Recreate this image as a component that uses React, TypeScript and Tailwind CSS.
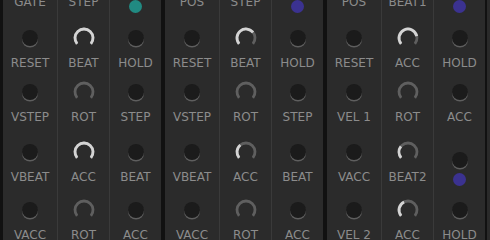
import React from "react";

type Widget = { kind: "jack" } | { kind: "knob"; v: number };
type Row = { w: Widget; label: string; special?: boolean };
type Col = { top: string; led?: string; rows: Row[] };

const J: Widget = { kind: "jack" };
const K = (v: number): Widget => ({ kind: "knob", v });

const SLOT_H = ["h-[49px]", "h-[42px]", "h-[48px]", "h-[46px]"];

function polar(cx: number, cy: number, r: number, deg: number) {
  const a = (deg * Math.PI) / 180;
  return [cx + r * Math.sin(a), cy - r * Math.cos(a)];
}

function arc(cx: number, cy: number, r: number, a0: number, a1: number) {
  const [x0, y0] = polar(cx, cy, r, a0);
  const [x1, y1] = polar(cx, cy, r, a1);
  const large = a1 - a0 > 180 ? 1 : 0;
  return `M ${x0.toFixed(2)} ${y0.toFixed(2)} A ${r} ${r} 0 ${large} 1 ${x1.toFixed(2)} ${y1.toFixed(2)}`;
}

function Knob({ v }: { v: number }) {
  const a0 = -130;
  const a1 = 130;
  const av = a0 + v * (a1 - a0);
  return (
    <svg width="24" height="24" viewBox="0 0 24 24">
      <path d={arc(12, 12, 9, a0, a1)} fill="none" stroke="#5f5f5f" strokeWidth="2.8" />
      {v > 0.01 && (
        <path d={arc(12, 12, 9, a0, av)} fill="none" stroke="#d4d4d4" strokeWidth="2.8" />
      )}
    </svg>
  );
}

function Jack() {
  return (
    <div className="w-[16px] h-[16px] rounded-full bg-[#1b1b1b] shadow-[0_1.5px_0_0_#5e5e5e]" />
  );
}

function Led({ color }: { color: string }) {
  return (
    <div
      className={
        "w-[13px] h-[13px] rounded-full blur-[0.6px] " +
        (color === "teal" ? "bg-[#218a82]" : "bg-[#3b3290]")
      }
    />
  );
}

function Label({ text, top }: { text: string; top?: boolean }) {
  return (
    <div
      className={
        "h-[12px] flex items-center justify-center text-[12px] leading-none text-[#8c8c8c] whitespace-nowrap" +
        (top ? " -mt-[4px]" : "")
      }
    >
      {text}
    </div>
  );
}

function Column({ col, first }: { col: Col; first: boolean }) {
  return (
    <div className={"flex flex-col " + (first ? "" : "border-l border-[#3a3a3a]")}>
      {col.led ? (
        <div className="h-[12px] -mt-[4px] flex items-start justify-center pt-[4px]">
          <Led color={col.led} />
        </div>
      ) : (
        <Label text={col.top} top />
      )}
      {col.rows.map((r, i) => (
        <React.Fragment key={i}>
          <div
            className={
              "flex flex-col justify-end " + SLOT_H[i] + (r.special ? " pb-[0px]" : " pb-[8px]")
            }
          >
            <div className="h-[22px] flex items-center justify-center">
              {r.w.kind === "jack" ? <Jack /> : <Knob v={r.w.v} />}
            </div>
          </div>
          {r.label === "LED" ? (
            <div className="h-[12px] flex items-start justify-center pt-[2px]">
              <Led color="purple" />
            </div>
          ) : (
            <Label text={r.label} />
          )}
        </React.Fragment>
      ))}
    </div>
  );
}

const modules: Col[][] = [
  [
    { top: "GATE", rows: [{ w: J, label: "RESET" }, { w: J, label: "VSTEP" }, { w: J, label: "VBEAT" }, { w: J, label: "VACC" }] },
    { top: "STEP", rows: [{ w: K(1), label: "BEAT" }, { w: K(0), label: "ROT" }, { w: K(1), label: "ACC" }, { w: K(0), label: "ROT" }] },
    { top: "", led: "teal", rows: [{ w: J, label: "HOLD" }, { w: J, label: "STEP" }, { w: J, label: "BEAT" }, { w: J, label: "ACC" }] },
  ],
  [
    { top: "POS", rows: [{ w: J, label: "RESET" }, { w: J, label: "VSTEP" }, { w: J, label: "VBEAT" }, { w: J, label: "VACC" }] },
    { top: "STEP", rows: [{ w: K(0.7), label: "BEAT" }, { w: K(0), label: "ROT" }, { w: K(0.35), label: "ACC" }, { w: K(0), label: "ROT" }] },
    { top: "", led: "purple", rows: [{ w: J, label: "HOLD" }, { w: J, label: "STEP" }, { w: J, label: "BEAT" }, { w: J, label: "ACC" }] },
  ],
  [
    { top: "POS", rows: [{ w: J, label: "RESET" }, { w: J, label: "VEL 1" }, { w: J, label: "VACC" }, { w: J, label: "VEL 2" }] },
    { top: "BEAT1", rows: [{ w: K(0.8), label: "ACC" }, { w: K(0), label: "ROT" }, { w: K(0.3), label: "BEAT2" }, { w: K(0.4), label: "ACC" }] },
    { top: "", led: "purple", rows: [{ w: J, label: "HOLD" }, { w: J, label: "ACC" }, { w: J, label: "LED", special: true }, { w: J, label: "HOLD" }] },
  ],
];

export default function App() {
  return (
    <div
      className="w-[490px] h-[240px] overflow-hidden flex bg-[#111111] pl-[3px] gap-[4px]"
      style={{ fontFamily: '"DejaVu Sans", sans-serif' }}
    >
      {modules.map((m, mi) => (
        <div key={mi} className="w-[158px] shrink-0 h-full bg-[#2b2b2b] grid grid-cols-[54px_52px_52px] overflow-hidden">
          {m.map((c, ci) => (
            <Column key={ci} col={c} first={ci === 0} />
          ))}
        </div>
      ))}
      <div className="flex-1 -ml-[2px] h-full bg-[#2a2a2a]" />
    </div>
  );
}
